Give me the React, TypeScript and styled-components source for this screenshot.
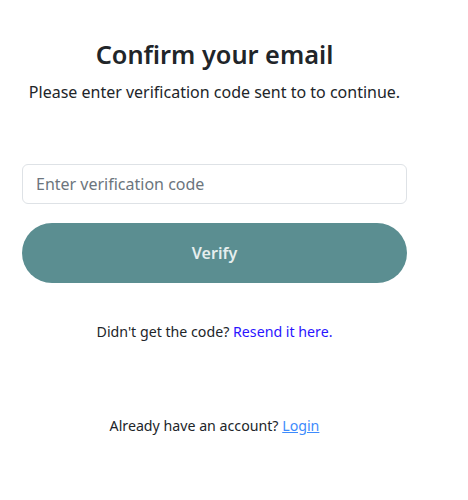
import React from "react";
import styled, { createGlobalStyle } from "styled-components";

const Global = createGlobalStyle`
  html, body { margin: 0; padding: 0; background: #ffffff; }
  body { font-family: "Noto Sans", "Open Sans", sans-serif; color: #212529; }
  * { box-sizing: border-box; }
`;

const Page = styled.div`
  width: 468px;
  height: 500px;
  padding: 36px 0 0 22px;
`;

const Card = styled.div`
  width: 385px;
  display: flex;
  flex-direction: column;
  align-items: stretch;
`;

const Title = styled.h1`
  margin: 0;
  font-size: 25.3px;
  line-height: 36px;
  font-weight: 600;
  text-align: center;
  color: #212529;
`;

const Subtitle = styled.p`
  margin: 8px 0 0;
  font-size: 16px;
  line-height: 24px;
  text-align: center;
  color: #212529;
`;

const Input = styled.input`
  margin-top: 60px;
  height: 40px;
  width: 100%;
  border: 1px solid #dee2e6;
  border-radius: 6px;
  padding: 0 13px;
  font-family: inherit;
  font-size: 16px;
  color: #212529;
  outline: none;
  &::placeholder { color: #6c757d; }
`;

const Button = styled.button`
  margin-top: 19px;
  height: 60px;
  width: 100%;
  border: none;
  border-radius: 30px;
  background: #5b8e91;
  color: #e6eeee;
  font-family: inherit;
  font-size: 16px;
  font-weight: 600;
`;

const Note = styled.p<{ $top: number }>`
  margin: ${(p) => p.$top}px 0 0;
  font-size: 14.2px;
  line-height: 20px;
  text-align: center;
  color: #212529;
`;

const Link = styled.a<{ $variant: "plain" | "underline" }>`
  color: ${(p) => (p.$variant === "plain" ? "#2a14ff" : "#3d8bfd")};
  text-decoration: ${(p) => (p.$variant === "plain" ? "none" : "underline")};
  cursor: pointer;
`;

export default function App() {
  return (
    <>
      <Global />
      <Page>
        <Card>
          <Title>Confirm your email</Title>
          <Subtitle>Please enter verification code sent to to continue.</Subtitle>
          <Input placeholder="Enter verification code" />
          <Button>Verify</Button>
          <Note $top={39}>
            Didn't get the code? <Link $variant="plain">Resend it here.</Link>
          </Note>
          <Note $top={74}>
            Already have an account? <Link $variant="underline">Login</Link>
          </Note>
        </Card>
      </Page>
    </>
  );
}
